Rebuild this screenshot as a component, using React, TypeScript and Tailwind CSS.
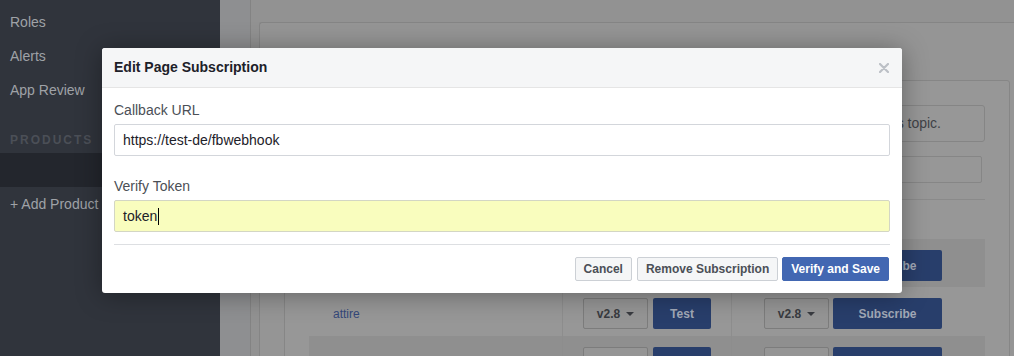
import React from 'react';

const navItems = ['Roles', 'Alerts', 'App Review'];

// Background table rows, already dimmed by the modal backdrop.
const rows = [
  { name: 'about', shaded: true, h: 'h-[48px]' },
  { name: 'attire', shaded: false, h: 'h-[49px]' },
  { name: 'awards', shaded: true, h: 'h-[48px]' },
];

const VersionPicker: React.FC = () => (
  <div className="flex h-[31px] w-[65px] items-center justify-center gap-[6px] rounded-[2px] border border-[#7c7c7c] bg-[#959595] text-[12px] font-bold text-[#393b40]">
    v2.8
    <span className="h-0 w-0 border-x-[4px] border-t-[4px] border-x-transparent border-t-[#393b40]" />
  </div>
);

const DimButton: React.FC<{ label: string; width: string }> = ({ label, width }) => (
  <div className={`flex h-[31px] ${width} items-center justify-center rounded-[2px] bg-[#283e6b] text-[12px] font-bold text-[#a1a8b6]`}>
    {label}
  </div>
);

const Background: React.FC = () => (
  <div className="flex h-full">
    <aside className="w-[220px] shrink-0 bg-[#30343c] pt-[5px] text-[14px] text-[#9fa2a7]">
      {navItems.map(item => (
        <div key={item} className="flex h-[34px] items-center px-[10px]">{item}</div>
      ))}
      <div className="flex h-[46px] items-end px-[10px] pb-[4px] text-[12px] font-bold tracking-[2px] text-[#4b4f57]">
        PRODUCTS
      </div>
      <div className="h-[34px] bg-[#23262d]" />
      <div className="flex h-[34px] items-center px-[10px]">+ Add Product</div>
    </aside>

    <main className="flex flex-1 overflow-hidden bg-[#929292]">
      <div className="w-[31px] shrink-0 border-r border-[#838383] bg-[#8e8f91]" />
      <div className="flex-1 pl-[8px] pt-[22px]">
        <div className="h-full rounded-tl-[3px] border-l border-t border-[#858585] bg-[#959595] pl-[24px] pr-[4px] pt-[57px]">
          <div className="rounded-[3px] border border-[#868686] bg-[#979797] px-[24px] pb-[40px] pt-[24px]">
            <div className="flex h-[37px] items-center justify-end rounded-[3px] border border-[#858585] pr-[43px] text-[14px] text-[#404247]">
              Select a page to subscribe to this topic.
            </div>
            <div className="mr-[3px] mt-[14px] h-[27px] rounded-[2px] border border-[#868686]" />
            <div className="mt-[16px] h-[40px] border-t border-[#8a8a8a]" />
            {rows.map(row => (
              <div
                key={row.name}
                className={`grid ${row.h} grid-cols-[253px_169px_254px] ${row.shaded ? 'bg-[#8f8f8f]' : ''}`}
              >
                <div className="flex h-[31px] items-center pl-[24px] mt-[11px] text-[12px] text-[#34487a]">{row.name}</div>
                <div className="flex items-start justify-center gap-[5px] border-l border-[#8d8d8d] pt-[11px]">
                  <VersionPicker />
                  <DimButton label="Test" width="w-[58px]" />
                </div>
                <div className="flex items-start gap-[4px] border-l border-[#8d8d8d] pl-[32px] pt-[11px]">
                  <VersionPicker />
                  <DimButton label="Subscribe" width="w-[109px]" />
                </div>
              </div>
            ))}
          </div>
        </div>
      </div>
    </main>
  </div>
);

const Field: React.FC<{ label: string; value: string; autofill?: boolean; caret?: boolean; className?: string }> = ({
  label,
  value,
  autofill,
  caret,
  className = '',
}) => (
  <div className={className}>
    <div className="h-[18px] text-[14px] leading-[18px] text-[#4b4f56]">{label}</div>
    <div
      className={`mt-[5px] flex h-[32px] items-center rounded-[2px] border px-[8px] text-[14px] text-[#1d2129] ${
        autofill ? 'border-[#d3d6c4] bg-[#f9fdbe]' : 'border-[#d3d6db] bg-white'
      }`}
    >
      {value}
      {caret && <span className="ml-px h-[17px] w-px bg-black" />}
    </div>
  </div>
);

export default function App() {
  return (
    <div className="relative h-[356px] w-[1014px] overflow-hidden font-['Liberation_Sans',Arial,sans-serif]">
      <Background />

      <div className="absolute left-[102px] top-[48px] w-[800px] overflow-hidden rounded-[3px] bg-white shadow-[0_2px_26px_rgba(0,0,0,0.35)]">
        <div className="flex h-[40px] items-center justify-between border-b border-[#e5e5e5] bg-[#f5f6f7] pl-[12px] pr-[13px]">
          <span className="text-[14px] font-bold text-[#1d2129]">Edit Page Subscription</span>
          <svg width="10" height="10" viewBox="0 0 10 10" className="mt-[1px]">
            <path d="M1 1L9 9M9 1L1 9" stroke="#bcc0c6" strokeWidth="2.2" strokeLinecap="round" />
          </svg>
        </div>

        <div className="px-[12px] pb-[12px] pt-[13px]">
          <Field label="Callback URL" value="https://test-de/fbwebhook" />
          <Field label="Verify Token" value="token" autofill caret className="mt-[21px]" />

          <div className="mt-[12px] border-t border-[#dddfe2]" />

          <div className="mt-[12px] flex justify-end gap-[4px] pr-[1px]">
            <button className="h-[24px] rounded-[2px] border border-[#ccd0d5] bg-[#f5f6f7] px-[8px] text-[12px] font-bold text-[#4b4f56]">
              Cancel
            </button>
            <button className="ml-px h-[24px] rounded-[2px] border border-[#ccd0d5] bg-[#f5f6f7] px-[8px] text-[12px] font-bold text-[#4b4f56]">
              Remove Subscription
            </button>
            <button className="h-[24px] rounded-[2px] border border-[#4267b2] bg-[#4267b2] px-[8px] text-[12px] font-bold text-white">
              Verify and Save
            </button>
          </div>
        </div>
      </div>
    </div>
  );
}
